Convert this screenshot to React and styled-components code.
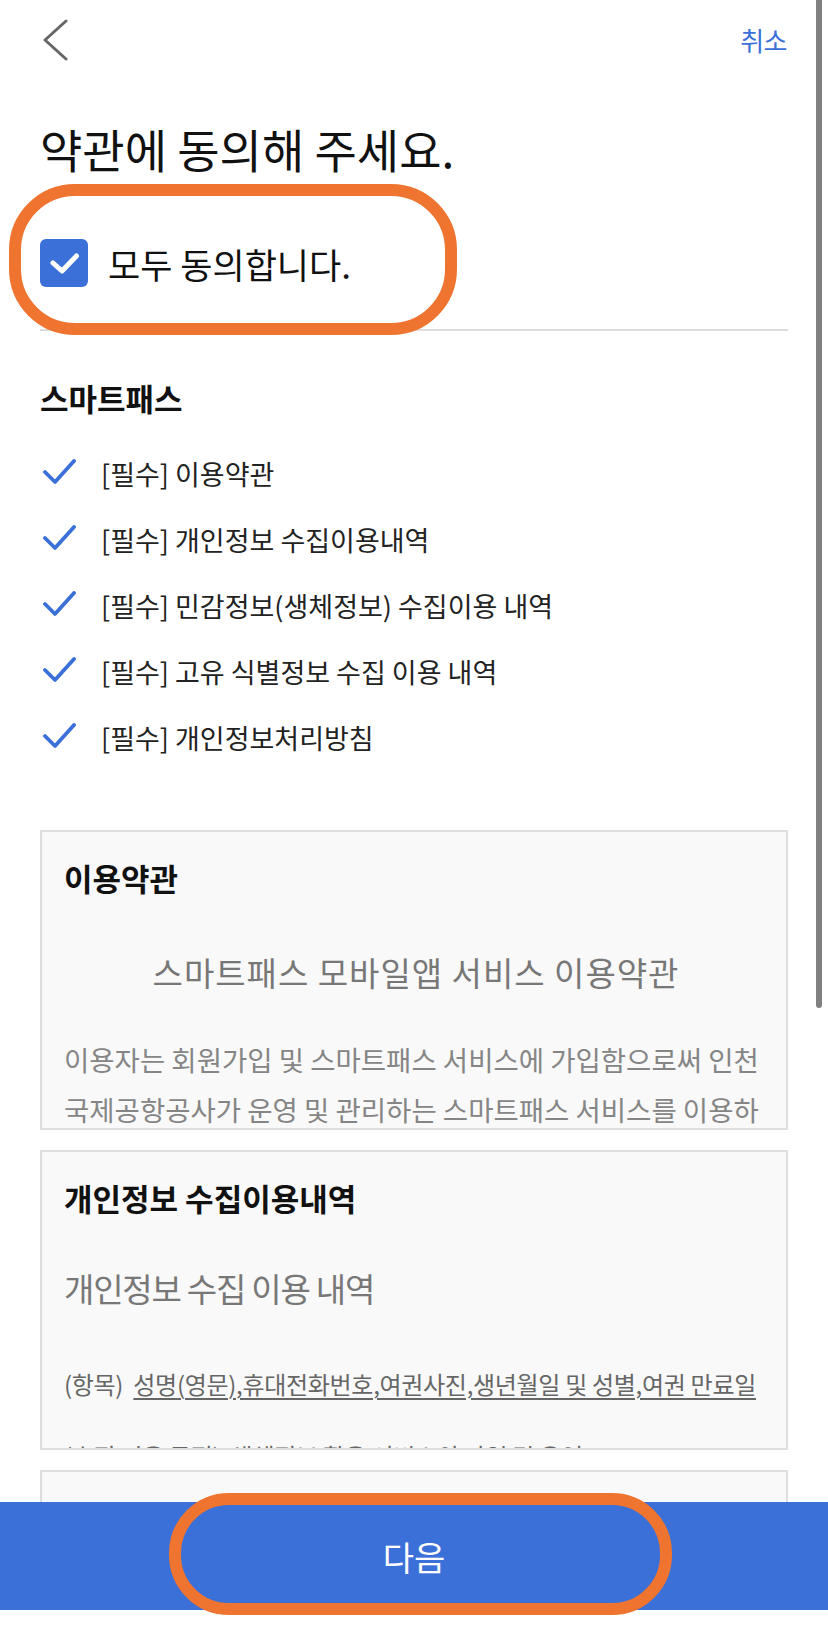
import React from "react";
import styled, { createGlobalStyle } from "styled-components";

const GlobalStyle = createGlobalStyle`
  html, body {
    margin: 0;
    padding: 0;
    background: #ffffff;
  }
  body {
    font-family: "Noto Sans CJK KR", "Noto Sans", sans-serif;
    color: #111;
  }
`;

const BLUE = "#3b70d8";
const ORANGE = "#ee7430";

const Page = styled.div`
  position: relative;
  width: 828px;
  height: 1632px;
  display: flex;
  flex-direction: column;
  background: #fff;
  overflow: hidden;
`;

const Header = styled.header`
  height: 80px;
  flex-shrink: 0;
  display: flex;
  align-items: center;
  justify-content: space-between;
  padding: 0 41px 0 43px;
`;

const CancelButton = styled.button`
  border: none;
  background: none;
  padding: 0;
  font-family: inherit;
  font-size: 26px;
  letter-spacing: -0.5px;
  color: ${BLUE};
  line-height: 1;
`;

const ScrollArea = styled.main`
  flex: 1;
  overflow: hidden;
  padding: 0 40px;
`;

const Title = styled.h1`
  margin: 40px 0 0;
  font-size: 46px;
  font-weight: 400;
  line-height: 57px;
  color: #111;
`;

const AgreeAllRow = styled.label`
  margin-top: 52px;
  height: 68px;
  display: flex;
  align-items: center;
  gap: 20px;
  font-size: 35px;
  color: #111;
`;

const CheckBox = styled.span`
  width: 48px;
  height: 48px;
  border-radius: 6px;
  background: ${BLUE};
  display: flex;
  align-items: center;
  justify-content: center;
  flex-shrink: 0;
`;

const Divider = styled.hr`
  margin: 32px 0 0;
  border: none;
  height: 2px;
  background: #dddddd;
`;

const SectionTitle = styled.h2`
  margin: 47px 0 0;
  font-size: 31px;
  font-weight: 700;
  line-height: 40px;
  color: #111;
`;

const TermList = styled.ul`
  list-style: none;
  margin: 22px 0 0;
  padding: 0;
`;

const TermItem = styled.li`
  height: 66px;
  display: flex;
  align-items: center;
  gap: 24px;
  padding-left: 3px;
  font-size: 27px;
  color: #222;
`;

const TermBox = styled.section`
  margin-top: ${(p) => p.$gap}px;
  height: 300px;
  box-sizing: border-box;
  border: 2px solid #dedede;
  background: #f9f9f9;
  padding: 0 18px 0 22px;
  overflow: hidden;
`;

const BoxTitle = styled.h3`
  margin: 26px 0 0;
  font-size: 31px;
  font-weight: 700;
  line-height: 40px;
  color: #111;
`;

const DocTitle = styled.p`
  margin: ${(p) => p.$top}px 0 0;
  font-size: 33px;
  line-height: 44px;
  color: #777;
  text-align: ${(p) => (p.$center ? "center" : "left")};
  letter-spacing: ${(p) => (p.$center ? "1px" : "-1.2px")};
`;

const Paragraph = styled.p`
  margin: 40px 0 0;
  font-size: 27.5px;
  line-height: 50px;
  color: #858585;
`;

const InfoLine = styled.p`
  margin: ${(p) => p.$top}px 0 0;
  font-size: 24px;
  line-height: 36px;
  letter-spacing: -0.3px;
  color: #666;
  white-space: nowrap;

  u {
    text-underline-offset: 4px;
    text-decoration-thickness: 1.5px;
  }
`;

const Footer = styled.footer`
  flex-shrink: 0;
  padding-bottom: 22px;
  background: #fff;
`;

const NextButton = styled.button`
  width: 100%;
  height: 108px;
  border: none;
  background: ${BLUE};
  color: #fff;
  font-family: inherit;
  font-size: 34px;
`;

const Highlight = styled.div`
  position: absolute;
  left: ${(p) => p.$left}px;
  top: ${(p) => p.$top}px;
  width: ${(p) => p.$width}px;
  height: ${(p) => p.$height}px;
  box-sizing: border-box;
  border: 12px solid ${ORANGE};
  border-radius: ${(p) => p.$radius}px;
  pointer-events: none;
`;

const ScrollThumb = styled.div`
  position: absolute;
  top: 0;
  right: 6px;
  width: 6px;
  height: 1008px;
  background: #808080;
  border-radius: 0 0 3px 3px;
`;

const BackIcon = () => (
  <svg width="25" height="42" viewBox="0 0 25 42">
    <polyline
      points="23,2 2,21 23,40"
      fill="none"
      stroke="#666"
      strokeWidth="3"
      strokeLinecap="round"
      strokeLinejoin="round"
    />
  </svg>
);

const BoxCheck = () => (
  <svg width="48" height="48" viewBox="0 0 48 48">
    <polyline
      points="13,24 22,32 36.5,17"
      fill="none"
      stroke="#fff"
      strokeWidth="5"
      strokeLinecap="round"
      strokeLinejoin="round"
    />
  </svg>
);

const TickIcon = () => (
  <svg width="34" height="28" viewBox="0 0 34 28">
    <polyline
      points="2,13 12,23 31,2"
      fill="none"
      stroke={BLUE}
      strokeWidth="3.8"
      strokeLinecap="round"
      strokeLinejoin="round"
    />
  </svg>
);

const terms = [
  "[필수] 이용약관",
  "[필수] 개인정보 수집이용내역",
  "[필수] 민감정보(생체정보) 수집이용 내역",
  "[필수] 고유 식별정보 수집 이용 내역",
  "[필수] 개인정보처리방침",
];

const App = () => {
  return (
    <Page>
      <GlobalStyle />
      <Header>
        <BackIcon />
        <CancelButton>취소</CancelButton>
      </Header>

      <ScrollArea>
        <Title>약관에 동의해 주세요.</Title>
        <AgreeAllRow>
          <CheckBox>
            <BoxCheck />
          </CheckBox>
          모두 동의합니다.
        </AgreeAllRow>
        <Divider />

        <SectionTitle>스마트패스</SectionTitle>
        <TermList>
          {terms.map((t) => (
            <TermItem key={t}>
              <TickIcon />
              {t}
            </TermItem>
          ))}
        </TermList>

        <TermBox $gap={60}>
          <BoxTitle>이용약관</BoxTitle>
          <DocTitle $top={52} $center>
            스마트패스 모바일앱 서비스 이용약관
          </DocTitle>
          <Paragraph>
            이용자는 회원가입 및 스마트패스 서비스에 가입함으로써 인천국제공항공사가 운영 및 관리하는 스마트패스
            서비스를 이용하실 수 있습니다.
          </Paragraph>
        </TermBox>

        <TermBox $gap={20}>
          <BoxTitle>개인정보 수집이용내역</BoxTitle>
          <DocTitle $top={48}>개인정보 수집 이용 내역</DocTitle>
          <InfoLine $top={56}>
            (항목)&nbsp; <u>성명(영문),휴대전화번호,여권사진,생년월일 및 성별,여권 만료일</u>
          </InfoLine>
          <InfoLine $top={36}>(수집 이용 목적)&nbsp; 생체정보 활용 서비스의 가입 및 운영</InfoLine>
        </TermBox>

        <TermBox $gap={20}>
          <BoxTitle>민감정보 수집이용내역</BoxTitle>
        </TermBox>
      </ScrollArea>

      <Footer>
        <NextButton>다음</NextButton>
      </Footer>

      <ScrollThumb />
      <Highlight $left={9} $top={184} $width={448} $height={151} $radius={66} />
      <Highlight $left={169} $top={1493} $width={503} $height={122} $radius={60} />
    </Page>
  );
};

export default App;
